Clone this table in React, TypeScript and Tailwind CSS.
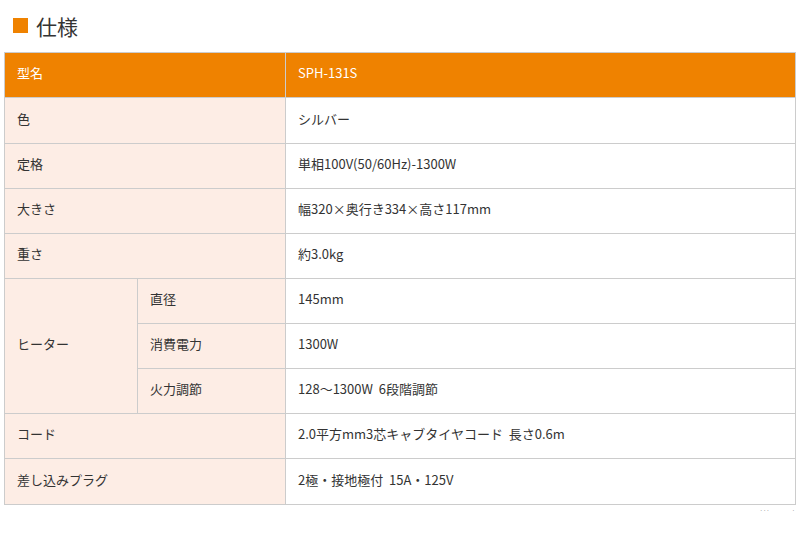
import React from "react";

const font = { fontFamily: '"Noto Sans CJK JP", "Noto Sans", sans-serif' };

const th = "border border-[#cccccc] bg-[#fdede5] px-3 pb-[5px] text-left align-middle font-normal";
const td = "border border-[#cccccc] bg-white px-3 pb-[5px] text-left align-middle";

export default function App() {
  const rows: [string, string, string][] = [
    ["色", "シルバー", "h-[46px]"],
    ["定格", "単相100V(50/60Hz)-1300W", "h-[45px]"],
    ["大きさ", "幅320×奥行き334×高さ117mm", "h-[45px]"],
    ["重さ", "約3.0kg", "h-[45px]"],
  ];
  return (
    <div className="w-[800px] h-[555px] bg-white text-[#333333]" style={font}>
      <div className="flex gap-2 pl-[13px] pt-[13px] h-[52px] items-start">
        <span className="block w-[15px] h-[15px] bg-[#ef8200] mt-[5px]" />
        <span className="text-[21px] leading-[26px]">仕様</span>
      </div>
      <div className="pl-[4px]">
        <table className="w-[792px] border-collapse text-[13px] leading-none">
          <colgroup>
            <col className="w-[133px]" />
            <col className="w-[148px]" />
            <col />
          </colgroup>
          <tbody>
            <tr className="h-[45px]">
              <th colSpan={2} className="border border-[#cccccc] bg-[#ef8200] px-3 pb-[5px] text-left font-normal text-white">型名</th>
              <td className="border border-[#cccccc] bg-[#ef8200] px-3 pb-[5px] text-white">SPH-131S</td>
            </tr>
            {rows.map(([k, v, h]) => (
              <tr key={k} className={h}>
                <th colSpan={2} className={th}>{k}</th>
                <td className={td}>{v}</td>
              </tr>
            ))}
            <tr className="h-[45px]">
              <th rowSpan={3} className={th}>ヒーター</th>
              <th className={th}>直径</th>
              <td className={td}>145mm</td>
            </tr>
            <tr className="h-[45px]">
              <th className={th}>消費電力</th>
              <td className={td}>1300W</td>
            </tr>
            <tr className="h-[45px]">
              <th className={th}>火力調節</th>
              <td className={td}>128～1300W&nbsp;&nbsp;6段階調節</td>
            </tr>
            <tr className="h-[45px]">
              <th colSpan={2} className={th}>コード</th>
              <td className={td}>2.0平方mm3芯キャブタイヤコード&nbsp;&nbsp;長さ0.6m</td>
            </tr>
            <tr className="h-[46px]">
              <th colSpan={2} className={th}>差し込みプラグ</th>
              <td className={td}>2極・接地極付&nbsp;&nbsp;15A・125V</td>
            </tr>
          </tbody>
        </table>
      </div>
      <div className="flex justify-end pr-[5px] pt-[3px] gap-[22px]">
        <span className="text-[6px] leading-none text-[#666]">···</span>
        <span className="text-[6px] leading-none text-[#666]">·</span>
      </div>
    </div>
  );
}
